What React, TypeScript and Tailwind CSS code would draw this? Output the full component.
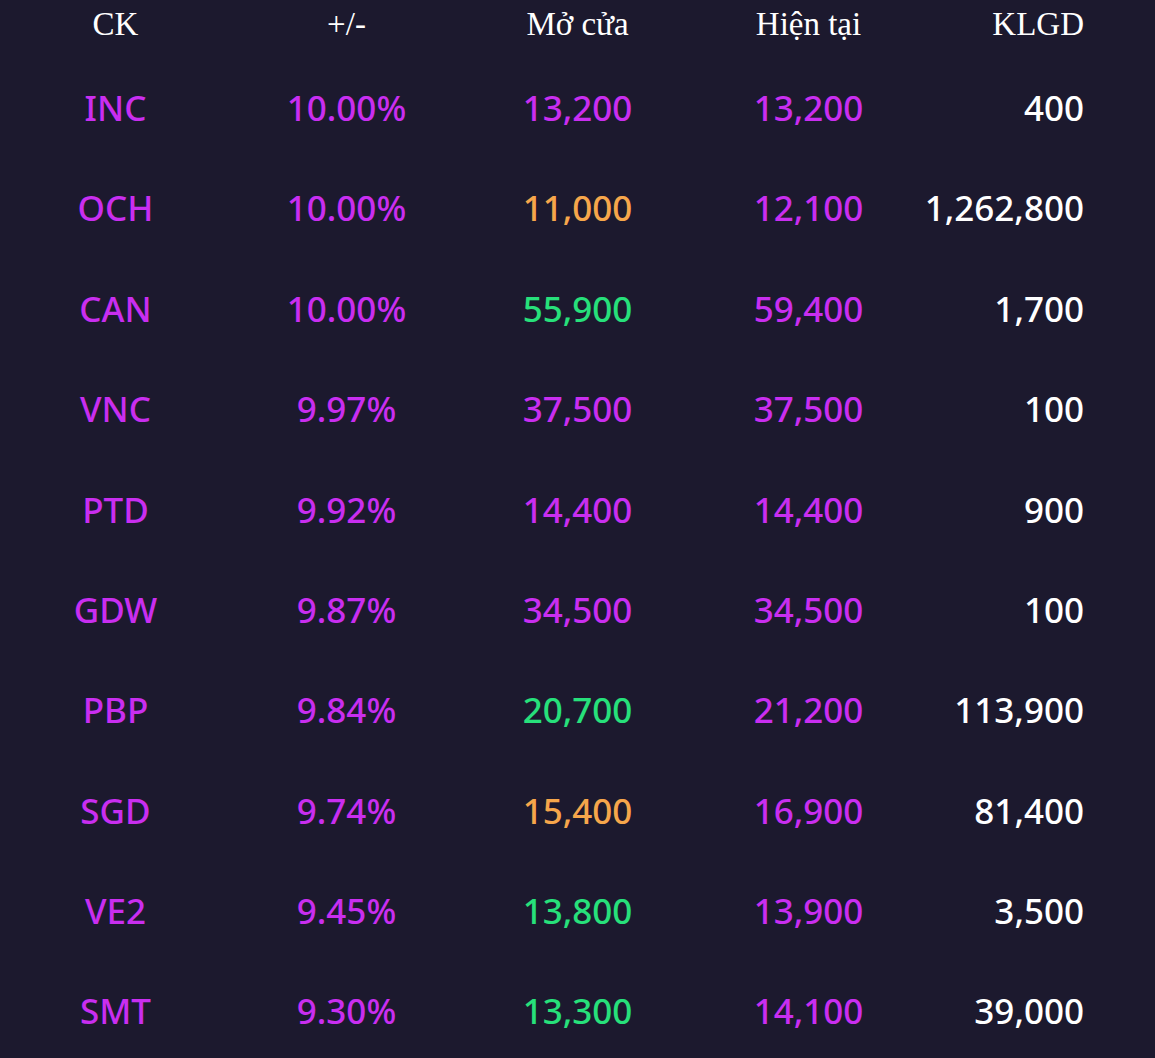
const rows: { ck: string; pct: string; open: string; openTone: "up" | "ref" | "ceil"; cur: string; vol: string }[] = [
  { ck: "INC", pct: "10.00%", open: "13,200", openTone: "ceil", cur: "13,200", vol: "400" },
  { ck: "OCH", pct: "10.00%", open: "11,000", openTone: "ref", cur: "12,100", vol: "1,262,800" },
  { ck: "CAN", pct: "10.00%", open: "55,900", openTone: "up", cur: "59,400", vol: "1,700" },
  { ck: "VNC", pct: "9.97%", open: "37,500", openTone: "ceil", cur: "37,500", vol: "100" },
  { ck: "PTD", pct: "9.92%", open: "14,400", openTone: "ceil", cur: "14,400", vol: "900" },
  { ck: "GDW", pct: "9.87%", open: "34,500", openTone: "ceil", cur: "34,500", vol: "100" },
  { ck: "PBP", pct: "9.84%", open: "20,700", openTone: "up", cur: "21,200", vol: "113,900" },
  { ck: "SGD", pct: "9.74%", open: "15,400", openTone: "ref", cur: "16,900", vol: "81,400" },
  { ck: "VE2", pct: "9.45%", open: "13,800", openTone: "up", cur: "13,900", vol: "3,500" },
  { ck: "SMT", pct: "9.30%", open: "13,300", openTone: "up", cur: "14,100", vol: "39,000" },
];

const toneClass = {
  ceil: "text-[#c92ef0]",
  ref: "text-[#f6a64b]",
  up: "text-[#27e07b]",
};

export default function App() {
  return (
    <div className="w-[1155px] h-[1058px] bg-[#1c192e] overflow-hidden">
      {/* header */}
      <div className="grid grid-cols-5 h-[48px] items-center text-white text-[33px] font-['Liberation_Serif',serif]">
        <div className="text-center">CK</div>
        <div className="text-center">+/-</div>
        <div className="text-center">Mở cửa</div>
        <div className="text-center">Hiện tại</div>
        <div className="text-right pr-[71px]">KLGD</div>
      </div>

      <div className="pt-[10px] text-[35px] font-medium font-['Noto_Sans',sans-serif]">
        {rows.map((r) => (
          <div key={r.ck} className="grid grid-cols-5 h-[100.4px] items-center">
            <div className="text-center text-[#c92ef0]">{r.ck}</div>
            <div className="text-center text-[#c92ef0]">{r.pct}</div>
            <div className={`text-center ${toneClass[r.openTone]}`}>{r.open}</div>
            <div className="text-center text-[#c92ef0]">{r.cur}</div>
            <div className="text-right pr-[71px] text-white">{r.vol}</div>
          </div>
        ))}
      </div>
    </div>
  );
}
